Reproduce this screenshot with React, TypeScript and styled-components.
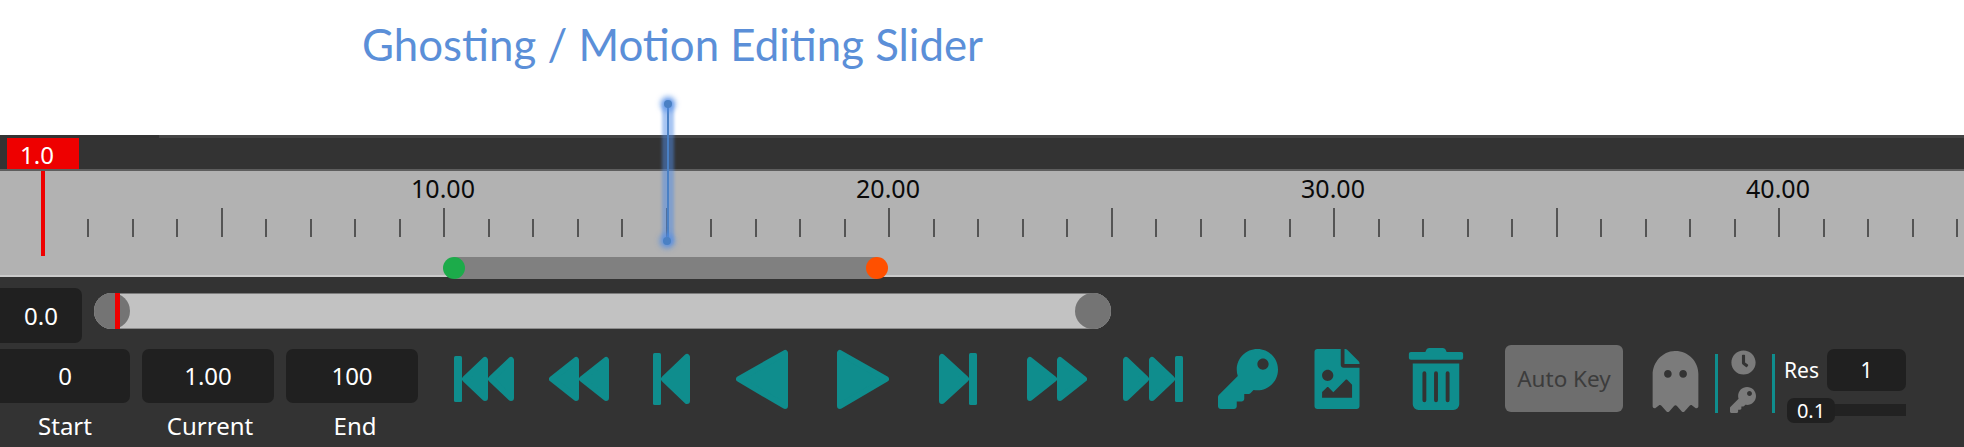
import React from 'react';
import styled, { createGlobalStyle } from 'styled-components';
import { FaClock, FaFileImage, FaGhost, FaKey, FaTrashAlt } from 'react-icons/fa';

const GlobalStyle = createGlobalStyle`
  html, body {
    margin: 0;
    padding: 0;
    background: #ffffff;
  }
`;

const Page = styled.div`
  position: relative;
  width: 1964px;
  height: 447px;
  overflow: hidden;
  font-family: 'Noto Sans', sans-serif;
`;

const Heading = styled.header`
  height: 135px;
  box-sizing: border-box;
  padding: 16px 0 0 362px;
  font-family: Lato, sans-serif;
  font-size: 43.8px;
  line-height: 56px;
  color: #5b8fd8;
  background: #ffffff;
`;

const Timeline = styled.section`
  display: flex;
  flex-direction: column;
  height: 312px;
  background: #333333;
`;

const TopStrip = styled.div`
  height: 3px;
  margin-left: 159px;
  background: #454545;
`;

const MarkerRow = styled.div`
  height: 31px;
  padding-left: 7px;
`;

const MarkerBadge = styled.div`
  width: 72px;
  height: 31px;
  box-sizing: border-box;
  padding-right: 12px;
  background: #ee0000;
  color: #ffffff;
  font-size: 24px;
  line-height: 33px;
  text-align: center;
`;

const Ruler = styled.div`
  position: relative;
  height: 108px;
  box-sizing: border-box;
  display: flex;
  background: #b2b2b2;
  border-top: 2px solid #5e5e5e;
  border-bottom: 2px solid #cacaca;
`;

const TickCell = styled.div`
  position: relative;
  flex: 0 0 44.5px;
  height: 66px;
  display: flex;
  align-items: flex-end;
  justify-content: flex-end;
`;

const Tick = styled.span<{ $major: boolean; $hidden: boolean }>`
  width: 2px;
  height: ${(p) => (p.$major ? 29 : 18)}px;
  background: #545454;
  visibility: ${(p) => (p.$hidden ? 'hidden' : 'visible')};
`;

const TickLabel = styled.span`
  position: absolute;
  right: -38px;
  top: 2px;
  width: 80px;
  text-align: center;
  font-size: 25px;
  line-height: 30px;
  color: #0a0a0a;
`;

const Playhead = styled.div`
  position: absolute;
  left: 41px;
  top: 0;
  width: 4px;
  height: 85px;
  background: #ee0000;
`;

const RangeBar = styled.div`
  position: absolute;
  left: 454px;
  top: 86px;
  width: 423px;
  height: 22px;
  background: #808080;
`;

const RangeHandle = styled.span<{ $side: 'left' | 'right'; $color: string }>`
  position: absolute;
  top: 0;
  ${(p) => p.$side}: -11px;
  width: 22px;
  height: 22px;
  border-radius: 50%;
  background: ${(p) => p.$color};
`;

const Controls = styled.div`
  display: flex;
  flex-direction: column;
  padding-top: 11px;
`;

const SliderRow = styled.div`
  display: flex;
  align-items: flex-start;
  gap: 12px;
  height: 55px;
`;

const ValueBox = styled.div<{ $width: number; $height: number; $size?: number }>`
  width: ${(p) => p.$width}px;
  height: ${(p) => p.$height}px;
  flex: none;
  background: #202020;
  border-radius: 0 7px 7px 0;
  color: #ffffff;
  font-size: ${(p) => p.$size ?? 24}px;
  line-height: ${(p) => p.$height}px;
  text-align: center;
`;

const RoundedBox = styled(ValueBox)`
  border-radius: 7px;
`;

const ScrubTrack = styled.div`
  position: relative;
  width: 1017px;
  height: 36px;
  margin-top: 5px;
  background: #c2c2c2;
  border-radius: 18px;
  box-shadow: inset 0 1px #7c7c7c, inset 0 -1px #8c8c8c;
`;

const ScrubHandle = styled.span<{ $side: 'left' | 'right' }>`
  position: absolute;
  top: 0;
  ${(p) => p.$side}: 0;
  width: 36px;
  height: 36px;
  border-radius: 50%;
  background: #747474;
`;

const ScrubMark = styled.span`
  position: absolute;
  left: 21px;
  top: 0;
  width: 5px;
  height: 36px;
  background: #ee0000;
`;

const BottomRow = styled.div`
  display: flex;
  margin-top: 6px;
`;

const Fields = styled.div`
  display: flex;
  gap: 12px;
  width: 418px;
  flex: none;
`;

const Field = styled.div`
  display: flex;
  flex-direction: column;
  align-items: center;
`;

const FieldLabel = styled.span<{ $offset?: number }>`
  margin-top: 6px;
  padding-left: ${(p) => p.$offset ?? 0}px;
  font-size: 24px;
  line-height: 34px;
  color: #ffffff;
`;

const Toolbar = styled.div`
  flex: 1;
  height: 60px;
  display: flex;
  align-items: center;
  color: #0f8d8d;
`;

const IconSlot = styled.span<{ $gap: number }>`
  display: inline-flex;
  margin-left: ${(p) => p.$gap}px;
  flex: none;
`;

const GhostSlot = styled(IconSlot)`
  margin-top: 4px;
  color: #7b7b7b;
`;

const AutoKey = styled.button`
  width: 118px;
  height: 67px;
  margin: 0 0 1px 38px;
  padding: 0;
  flex: none;
  border: none;
  border-radius: 6px;
  background: #6e6e6e;
  color: #3c3c3c;
  font-family: inherit;
  font-size: 22.5px;
`;

const Divider = styled.span<{ $gap: number }>`
  width: 3px;
  height: 59px;
  margin: 9px 0 0 ${(p) => p.$gap}px;
  background: #0f8d8d;
  flex: none;
`;

const ModeStack = styled.div`
  display: flex;
  flex-direction: column;
  align-items: center;
  gap: 12px;
  width: 28px;
  margin: 5px 0 0 11px;
  color: #7b7b7b;
  flex: none;
`;

const ResBlock = styled.div`
  display: flex;
  flex-direction: column;
  width: 122px;
  margin: 7px 0 0 9px;
  flex: none;
`;

const ResRow = styled.div`
  display: flex;
  align-items: center;
  justify-content: space-between;
  color: #ffffff;
  font-size: 21px;
`;

const ResTrack = styled.div`
  position: relative;
  height: 12px;
  margin: 13px 0 0 43px;
  width: 79px;
  background: #222222;
`;

const ResThumb = styled.div`
  position: absolute;
  left: -40px;
  top: -6px;
  width: 48px;
  height: 25px;
  border-radius: 7px;
  background: #202020;
  color: #ffffff;
  font-size: 20px;
  line-height: 25px;
  text-align: center;
`;

const GhostHandle = styled.div`
  position: absolute;
  left: 663px;
  top: 99px;
  width: 10px;
  height: 147px;
  pointer-events: none;
`;

const GhostGlow = styled.span`
  position: absolute;
  left: -1px;
  top: 0;
  width: 12px;
  height: 147px;
  border-radius: 6px;
  background: rgba(80, 140, 230, 0.5);
  filter: blur(1.5px);
`;

const GhostLine = styled.span`
  position: absolute;
  left: 4px;
  top: 5px;
  width: 1.5px;
  height: 137px;
  background: #4a80c4;
`;

const GhostDot = styled.span<{ $bottom?: boolean }>`
  position: absolute;
  ${(p) => (p.$bottom ? 'bottom: 1px; left: 0;' : 'top: 1px; left: 1px;')}
  width: 8px;
  height: 8px;
  border-radius: 50%;
  background: #4a80c4;
  box-shadow: 0 0 5px 4px rgba(80, 140, 230, 0.6);
`;

// transport buttons, drawn as rounded triangles plus an optional bar
const Transport: React.FC<{ width: number; height: number; shapes: string[]; bars?: number[] }> = ({
  width,
  height,
  shapes,
  bars = [],
}) => (
  <svg width={width} height={height} viewBox={`0 0 ${width} ${height}`} fill="currentColor" stroke="currentColor">
    {shapes.map((points) => (
      <polygon key={points} points={points} strokeWidth={6} strokeLinejoin="round" />
    ))}
    {bars.map((x) => (
      <rect key={x} x={x} y={0} width={8} height={height} rx={1.5} stroke="none" />
    ))}
  </svg>
);

const ticks = Array.from({ length: 44 }, (_, i) => i + 1);
const labels: Record<number, string> = { 10: '10.00', 20: '20.00', 30: '30.00', 40: '40.00' };

const App: React.FC = () => {
  return (
    <Page>
      <GlobalStyle />
      <Heading>Ghosting / Motion Editing Slider</Heading>
      <Timeline>
        <TopStrip />
        <MarkerRow>
          <MarkerBadge>1.0</MarkerBadge>
        </MarkerRow>
        <Ruler>
          {ticks.map((t) => (
            <TickCell key={t}>
              <Tick $major={t % 5 === 0} $hidden={t === 1} />
              {labels[t] && <TickLabel>{labels[t]}</TickLabel>}
            </TickCell>
          ))}
          <Playhead />
          <RangeBar>
            <RangeHandle $side="left" $color="#1cab4a" />
            <RangeHandle $side="right" $color="#ff5000" />
          </RangeBar>
        </Ruler>
        <Controls>
          <SliderRow>
            <ValueBox $width={82} $height={55}>0.0</ValueBox>
            <ScrubTrack>
              <ScrubHandle $side="left" />
              <ScrubMark />
              <ScrubHandle $side="right" />
            </ScrubTrack>
          </SliderRow>
          <BottomRow>
            <Fields>
              <Field>
                <ValueBox $width={130} $height={54}>0</ValueBox>
                <FieldLabel>Start</FieldLabel>
              </Field>
              <Field>
                <RoundedBox $width={132} $height={54}>1.00</RoundedBox>
                <FieldLabel $offset={4}>Current</FieldLabel>
              </Field>
              <Field>
                <RoundedBox $width={132} $height={54}>100</RoundedBox>
                <FieldLabel $offset={6}>End</FieldLabel>
              </Field>
            </Fields>
            <Toolbar>
              <IconSlot $gap={36}>
                <Transport width={60} height={46} bars={[0]} shapes={['11,23 31,4 31,42', '37,23 57,4 57,42']} />
              </IconSlot>
              <IconSlot $gap={35}>
                <Transport width={60} height={46} shapes={['3,23 27,4 27,42', '33,23 57,4 57,42']} />
              </IconSlot>
              <IconSlot $gap={44}>
                <Transport width={37} height={52} bars={[0]} shapes={['11,26 34,4 34,48']} />
              </IconSlot>
              <IconSlot $gap={46}>
                <Transport width={53} height={61} shapes={['3,30 49,4 49,57']} />
              </IconSlot>
              <IconSlot $gap={47}>
                <Transport width={53} height={61} shapes={['4,4 4,57 50,30']} />
              </IconSlot>
              <IconSlot $gap={50}>
                <Transport width={38} height={52} bars={[30]} shapes={['3,4 3,48 27,26']} />
              </IconSlot>
              <IconSlot $gap={50}>
                <Transport width={60} height={46} shapes={['3,4 3,42 27,23', '33,4 33,42 57,23']} />
              </IconSlot>
              <IconSlot $gap={36}>
                <Transport width={60} height={46} bars={[52]} shapes={['3,4 3,42 23,23', '29,4 29,42 49,23']} />
              </IconSlot>
              <IconSlot $gap={35}>
                <FaKey size={60} />
              </IconSlot>
              <IconSlot $gap={28.5}>
                <FaFileImage size={60} />
              </IconSlot>
              <IconSlot $gap={38.5}>
                <FaTrashAlt size={62} />
              </IconSlot>
              <AutoKey>Auto Key</AutoKey>
              <GhostSlot $gap={21.5}>
                <FaGhost size={61} />
              </GhostSlot>
              <Divider $gap={9.5} />
              <ModeStack>
                <FaClock size={25} />
                <FaKey size={26} />
              </ModeStack>
              <Divider $gap={15} />
              <ResBlock>
                <ResRow>
                  Res
                  <RoundedBox $width={79} $height={42} $size={21}>1</RoundedBox>
                </ResRow>
                <ResTrack>
                  <ResThumb>0.1</ResThumb>
                </ResTrack>
              </ResBlock>
            </Toolbar>
          </BottomRow>
        </Controls>
      </Timeline>
      <GhostHandle>
        <GhostGlow />
        <GhostLine />
        <GhostDot />
        <GhostDot $bottom />
      </GhostHandle>
    </Page>
  );
};

export default App;
